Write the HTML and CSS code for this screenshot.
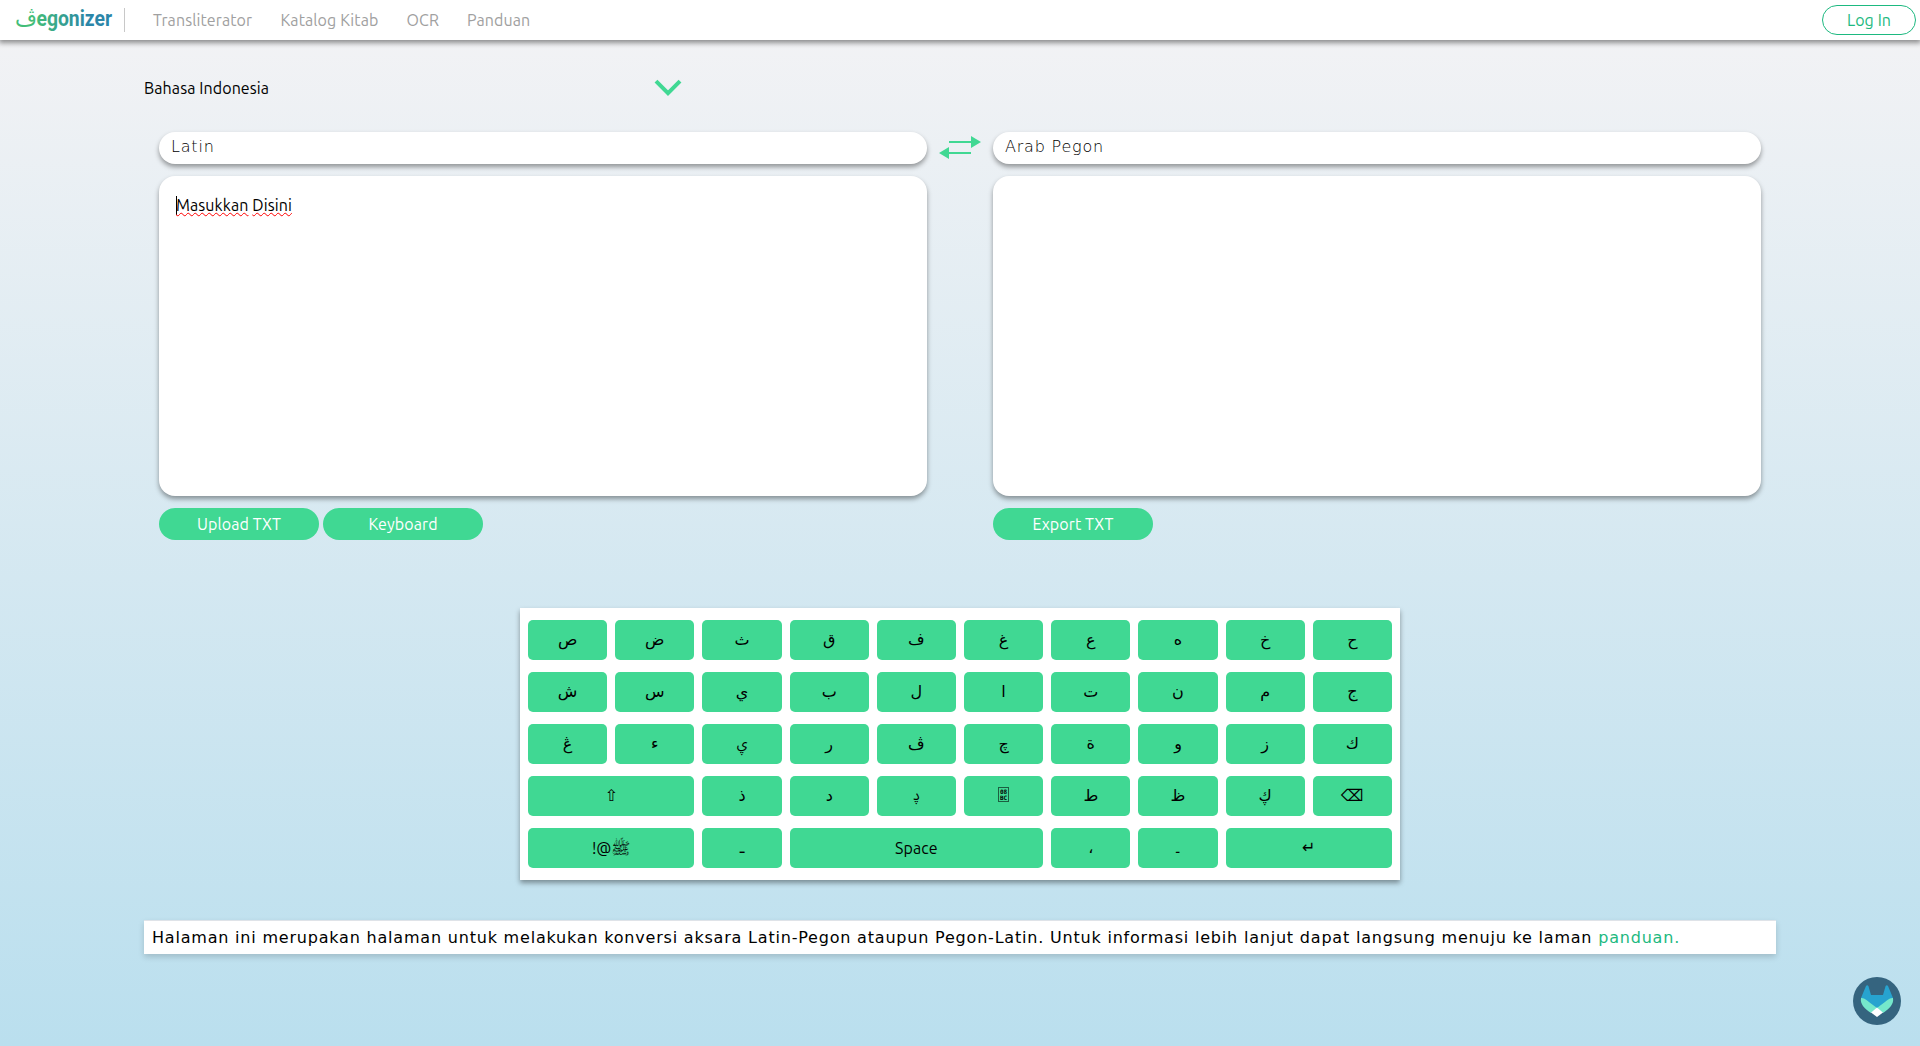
FILE: index.html
```html
<!DOCTYPE html>
<html lang="id">
<head>
<meta charset="utf-8">
<title>Pegonizer</title>
<link rel="stylesheet" href="styles.css">
</head>
<body>
<nav class="nav">
  <a class="logo"><svg width="100" height="40" viewBox="0 0 100 40"><defs><linearGradient id="brand" gradientUnits="userSpaceOnUse" x1="0" y1="0" x2="96" y2="0"><stop offset="0.2" stop-color="#43bd78"/><stop offset="0.75" stop-color="#2b86a8"/></linearGradient></defs><text class="logo-ar" x="-1" y="26" textLength="22" lengthAdjust="spacingAndGlyphs" fill="url(#brand)">ڤ</text><text class="logo-text" x="20.500" y="26" textLength="75.500" lengthAdjust="spacingAndGlyphs" fill="url(#brand)">egonizer</text></svg></a>
  <span class="divider"></span>
  <a class="link l1">Transliterator</a>
  <a class="link l2">Katalog Kitab</a>
  <a class="link l3">OCR</a>
  <a class="link l4">Panduan</a>
  <a class="login">Log In</a>
</nav>
<main class="page">
  <div class="language">
    <span>Bahasa Indonesia</span>
    <svg width="28" height="18" viewBox="0 0 28 18"><path d="M2 2.200 14 14.200 26 2.200" fill="none" stroke="#40d893" stroke-width="4"/></svg>
  </div>
  <div class="editor">
    <section class="pane">
      <div class="script">Latin</div>
      <div class="text"><span class="caret"></span><span class="bad">Masukkan</span> <span class="bad">Disini</span></div>
      <div class="actions"><button class="pill">Upload TXT</button><button class="pill">Keyboard</button></div>
    </section>
    <svg class="swap" width="42" height="24" viewBox="0 0 42 24"><g fill="#40d893"><path d="M10 5h22V0l10 6-10 6V7H10z"/><path d="M32 16H10v-5L0 17l10 6v-5h22z"/></g></svg>
    <section class="pane">
      <div class="script">Arab Pegon</div>
      <div class="text"></div>
      <div class="actions"><button class="pill">Export TXT</button></div>
    </section>
  </div>
  <div class="keyboard">
    <b>ص</b><b>ض</b><b>ث</b><b>ق</b><b>ف</b><b>غ</b><b>ع</b><b>ه</b><b>خ</b><b>ح</b>
    <b>ش</b><b>س</b><b>ي</b><b>ب</b><b>ل</b><b>ا</b><b>ت</b><b>ن</b><b>م</b><b>ج</b>
    <b>ڠ</b><b>ء</b><b class="rare">ۑ</b><b>ر</b><b>ڤ</b><b>چ</b><b>ة</b><b>و</b><b>ز</b><b>ك</b>
    <b class="w2">⇧</b><b>ذ</b><b>د</b><b class="rare">ࢮ</b><b><span class="codepoint">08<br>BC</span></b><b>ط</b><b>ظ</b><b>ڮ</b><b>⌫</b>
    <b class="w2 latin">!@ﷺ</b><b>ـ</b><b class="w3 latin">Space</b><b>،</b><b>۔</b><b class="w2">↵</b>
  </div>
  <p class="note">Halaman ini merupakan halaman untuk melakukan konversi aksara Latin-Pegon ataupun Pegon-Latin. Untuk informasi lebih lanjut dapat langsung menuju ke laman <a>panduan.</a></p>
</main>
<svg class="fox" width="48" height="48" viewBox="0 0 48 48"><circle cx="24" cy="24" r="24" fill="#35647f"/><path d="M8 21 13 9q1.200-1.600 2.400 0L18 18H30L32.600 9q1.200-1.600 2.400 0L40 21 24 32z" fill="#27a3cf"/><path d="M8 21c3-.6 5.500 2 16 10L18 36C11 31 7 27 8 21zM40 21c-3-.6-5.500 2-16 10l6 5c7-5 11-9 10-15z" fill="#75e8cb"/><path d="M24 30.500 30 35.500 24 40 18 35.500z" fill="#fff"/></svg>
</body>
</html>
```
FILE: styles.css
```css
* { box-sizing: border-box; }
body { margin: 0; height: 1046px; overflow: hidden; font: 16px/24px "Ubuntu", "Open Sans", "DejaVu Sans", sans-serif; letter-spacing: .1px; color: #000; background: linear-gradient(#f4f3f5, #badfee); }
.nav { position: relative; display: flex; align-items: center; height: 40px; padding: 0 4px 0 16px; background: #fff; box-shadow: 0 2px 5px 1px rgba(0,0,0,.42); color: #a0a0a0; }
.logo { height: 40px; width: 100px; }
.logo svg { display: block; overflow: visible; letter-spacing: 0; }
.logo-text { font: bold 22.5px/1 "Roboto", sans-serif; }
.logo-ar { font: 22px/1 "DejaVu Sans", sans-serif; }
.divider { width: 1px; height: 24px; margin: 0 28px 0 8px; background: #c8c8c8; }
.link { margin-right: 28px; white-space: nowrap; }
.l1 { width: 99.5px; } .l2 { width: 98px; } .l3 { width: 32.5px; } .l4 { width: 64px; }
.login { margin-left: auto; width: 94px; height: 30px; line-height: 28px; border: 1px solid #1db980; border-radius: 15px; color: #1db980; text-align: center; }
.page { width: 1632px; margin: 0 auto; }
.language { display: flex; align-items: center; justify-content: space-between; width: 538px; height: 24px; margin-top: 36px; }
.editor { display: flex; padding: 32px 15px 0; }
.pane { width: 768px; }
.script { height: 32px; padding: 3px 12px; border-radius: 16px; background: #fff; box-shadow: 0 3px 5px rgba(0,0,0,.38); font: 200 16px/24px "DejaVu Sans", sans-serif; letter-spacing: .8px; color: #000; }
.text { height: 320px; margin-top: 12px; padding: 17px; border-radius: 16px; background: #fff; box-shadow: 0 3px 5px rgba(0,0,0,.38); }
.caret { display: inline-block; width: 1px; height: 19px; margin-right: -1px; vertical-align: -4px; background: #000; }
.bad { text-decoration: underline wavy red 1px; text-decoration-skip-ink: none; text-underline-offset: 1px; }
.actions { display: flex; gap: 4px; margin-top: 12px; }
.pill { width: 160px; height: 32px; padding: 0; border: 0; border-radius: 16px; background: #40d893; color: #fff; font: inherit; letter-spacing: .1px; }
.swap { width: 42px; margin: 4px 12px 0; }
.keyboard { display: grid; grid-template-columns: repeat(10, 1fr); gap: 12px 8px; width: 880px; margin: 68px auto 0; padding: 12px 8px; background: #fff; box-shadow: 0 3px 5px rgba(0,0,0,.38); font: 16px/40px "DejaVu Sans", sans-serif; }
.keyboard b { height: 40px; border-radius: 5px; background: #40d893; font-weight: 400; text-align: center; }
.keyboard .w2 { grid-column: span 2; }
.keyboard .w3 { grid-column: span 3; }
.keyboard .latin { font-family: "Ubuntu", "Open Sans", "DejaVu Sans", sans-serif; }
.keyboard .rare { font-family: "Noto Sans Arabic", "Noto Naskh Arabic", "Noto Sans", sans-serif; font-size: 14px; }
.codepoint { display: inline-block; width: 11px; height: 15px; padding-top: 1px; border: 1px solid #1c5f41; font: bold 6px/6px "DejaVu Sans Mono", monospace; letter-spacing: 0; vertical-align: 1px; }
.note { height: 34px; margin: 40px 0 0; padding: 6px 8px; background: #fff; box-shadow: 0 3px 6px rgba(0,0,0,.16), inset 0 1px 0 #dfe3e8; font: 16px/24px "DejaVu Sans", sans-serif; letter-spacing: .8px; white-space: nowrap; }
.note a { color: #1db980; }
.fox { position: fixed; left: 1853px; top: 977px; }
```
